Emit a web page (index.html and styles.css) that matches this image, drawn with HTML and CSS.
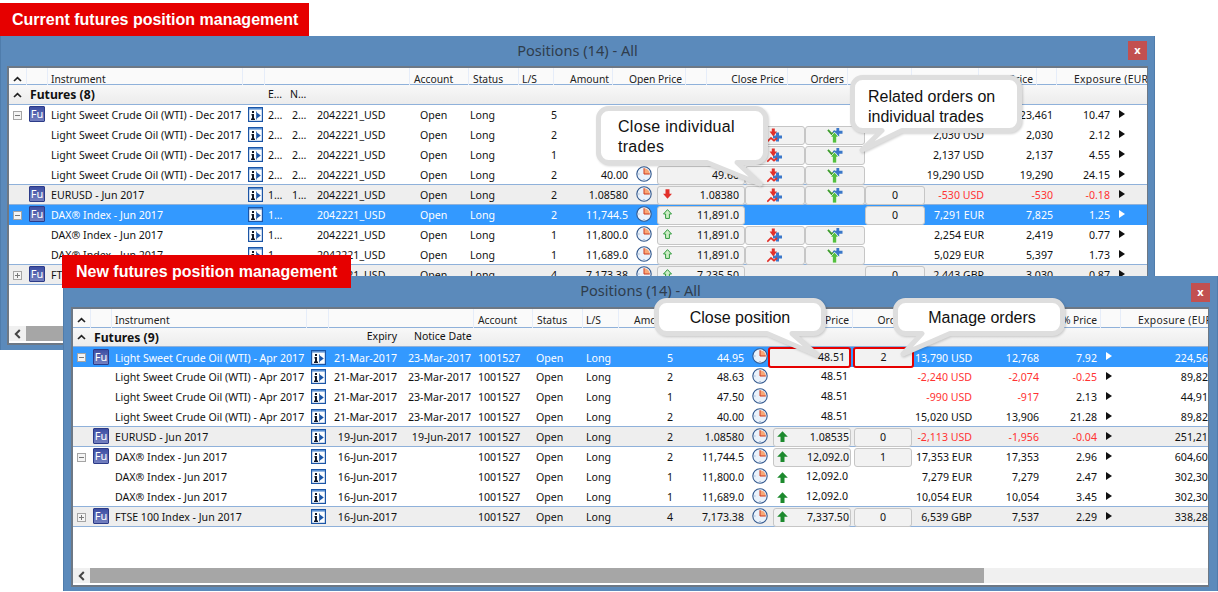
FILE: index.html
```html
<!DOCTYPE html>
<html lang="en">
<head>
<meta charset="utf-8">
<title>Futures position management</title>
<link rel="stylesheet" href="styles.css">
</head>
<body>
<svg class="defs" width="0" height="0" aria-hidden="true">
  <symbol id="clock" viewBox="0 0 16 16">
    <circle cx="8" cy="8" r="7.2" fill="#eaf2fb" stroke="#33598f" stroke-width="1.1"/>
    <path d="M8 8V2.2A5.8 5.8 0 0 1 13.8 8Z" fill="#f8a878"/>
    <path d="M8 2.2V8H13.8" fill="none" stroke="#cf3b1e" stroke-width="1"/>
    <path d="M8 13v1M2.4 8h1" stroke="#7f9cc4" stroke-width="1"/>
  </symbol>
  <symbol id="info" viewBox="0 0 15 15">
    <rect x=".6" y=".6" width="13.8" height="13.8" fill="#fbfdff" stroke="#1b55a6" stroke-width="1.2"/>
    <rect x="1" y="1" width="13" height="1.600" fill="#5a90d2"/>
    <path d="M4 4h2v2H4zM3.500 7H6v4.500h1V13H3v-1.500h1v-3h-.5z" fill="#101828"/>
    <path d="M8 4.500h.8v8H8z" fill="#1b55a6"/>
    <path d="M8.800 5.500 12.800 8.500 8.800 11.500z" fill="#1b55a6"/>
  </symbol>
  <symbol id="closeic" viewBox="0 0 16 14">
    <path d="M9 4h3v3h3v3h-3v3H9v-3H6V7h3z" fill="#3b78c9"/>
    <path d="M4.800 0h3v3h2.200L6.300 8 2.600 3h2.200z" fill="#e2302a"/>
    <path d="M.3 13.200 4 9.500l3 2.700 3-2.700" fill="none" stroke="#e2302a" stroke-width="1.700"/>
  </symbol>
  <symbol id="ordic" viewBox="0 0 16 16">
    <path d="M.5 2 4.500 6.500 8 3" fill="none" stroke="#3d9c2c" stroke-width="1.900"/>
    <path d="M9.500 0h3v3H16v3h-3.500v3h-3V6H6V3h3.500z" fill="#3b78c9"/>
    <path d="M7.500 4.500 12 9.500H9.800V16H5.200V9.500H3z" fill="#55c03f" stroke="#fff" stroke-width=".8"/>
  </symbol>
  <symbol id="upo" viewBox="0 0 9 10">
    <path d="M4.500.6 8.500 5H6.400v4.400H2.600V5H.5z" fill="#cdeec6" stroke="#2f9a3c" stroke-width="1"/>
  </symbol>
  <symbol id="ups" viewBox="0 0 11 11">
    <path d="M5.500.3 10.800 5.800H7.500V11H3.500V5.800H.2z" fill="#1d8a2e"/>
  </symbol>
  <symbol id="downs" viewBox="0 0 9 10">
    <path d="M2.500.3h4v4.500H9L4.500 9.800 0 4.800h2.500z" fill="#e2302a"/>
  </symbol>
  <symbol id="chev" viewBox="0 0 9 6">
    <path d="M1 5 4.500 1.600 8 5" fill="none" stroke="#222" stroke-width="1.700"/>
  </symbol>
  <symbol id="chevl" viewBox="0 0 7 10">
    <path d="M5.800 1 1.800 5l4 4" fill="none" stroke="#444" stroke-width="2"/>
  </symbol>
</svg>

<section class="window w1">
  <h2 class="title">Positions (14) - All<span class="x">x</span></h2>
  <div class="panel">
    <div class="head">
      <span class="hc"><svg class="chev"><use href="#chev"/></svg></span><span class="hc"></span><span class="hc pl">Instrument</span><span class="hc"></span><span class="hc"></span><span class="hc pl4">Account</span><span class="hc pl4">Status</span><span class="hc pl">L/S</span><span class="hc r amt">Amount</span><span class="hc r">Open Price</span><span class="hc"></span><span class="hc r">Close Price</span><span class="hc r">Orders</span><span class="hc r">Net</span><span class="hc r">P/L (ccy)</span><span class="hc r">Price</span><span class="hc"></span><span class="hc exh">Exposure (EUR)</span>
    </div>
    <div class="group"><svg class="chev"><use href="#chev"/></svg><b class="gname">Futures (8)</b><span class="g-e">E…</span><span class="g-n">N…</span></div>
    <div class="rows">
      <div class="row"><span class="exp minus"></span><span class="fu">Fu</span><span class="nm">Light Sweet Crude Oil (WTI) - Dec 2017</span><svg class="inf"><use href="#info"/></svg><span>2…</span><span>2…</span><span>2042221_USD</span><span>Open</span><span>Long</span><span class="n">5</span><span class="n">44.95</span><svg class="clk"><use href="#clock"/></svg><span class="btn"><span>49.66</span></span><span></span><span></span><span></span><span class="n">23,461 USD</span><span class="n">23,461</span><span class="n">10.47</span><span class="tri"></span><span class="n">249,412</span></div>
      <div class="row"><span></span><span></span><span class="nm">Light Sweet Crude Oil (WTI) - Dec 2017</span><svg class="inf"><use href="#info"/></svg><span>2…</span><span>2…</span><span>2042221_USD</span><span>Open</span><span>Long</span><span class="n">2</span><span class="n">48.63</span><svg class="clk"><use href="#clock"/></svg><span class="btn"><span>49.66</span></span><span class="btn ctr"><svg class="act"><use href="#closeic"/></svg></span><span class="btn ctr"><svg class="act"><use href="#ordic"/></svg></span><span></span><span class="n">2,030 USD</span><span class="n">2,030</span><span class="n">2.12</span><span class="tri"></span><span class="n">99,765</span></div>
      <div class="row"><span></span><span></span><span class="nm">Light Sweet Crude Oil (WTI) - Dec 2017</span><svg class="inf"><use href="#info"/></svg><span>2…</span><span>2…</span><span>2042221_USD</span><span>Open</span><span>Long</span><span class="n">1</span><span class="n">47.50</span><svg class="clk"><use href="#clock"/></svg><span class="btn"><span>49.66</span></span><span class="btn ctr"><svg class="act"><use href="#closeic"/></svg></span><span class="btn ctr"><svg class="act"><use href="#ordic"/></svg></span><span></span><span class="n">2,137 USD</span><span class="n">2,137</span><span class="n">4.55</span><span class="tri"></span><span class="n">49,882</span></div>
      <div class="row"><span></span><span></span><span class="nm">Light Sweet Crude Oil (WTI) - Dec 2017</span><svg class="inf"><use href="#info"/></svg><span>2…</span><span>2…</span><span>2042221_USD</span><span>Open</span><span>Long</span><span class="n">2</span><span class="n">40.00</span><svg class="clk"><use href="#clock"/></svg><span class="btn"><span>49.66</span></span><span class="btn ctr"><svg class="act"><use href="#closeic"/></svg></span><span class="btn ctr"><svg class="act"><use href="#ordic"/></svg></span><span></span><span class="n">19,290 USD</span><span class="n">19,290</span><span class="n">24.15</span><span class="tri"></span><span class="n">99,765</span></div>
      <div class="row par"><span></span><span class="fu">Fu</span><span class="nm">EURUSD - Jun 2017</span><svg class="inf"><use href="#info"/></svg><span>1…</span><span>1…</span><span>2042221_USD</span><span>Open</span><span>Long</span><span class="n">2</span><span class="n">1.08580</span><svg class="clk"><use href="#clock"/></svg><span class="btn"><svg class="arr"><use href="#downs"/></svg><span>1.08380</span></span><span class="btn ctr"><svg class="act"><use href="#closeic"/></svg></span><span class="btn ctr"><svg class="act"><use href="#ordic"/></svg></span><span class="btn ctr">0</span><span class="n neg">-530 USD</span><span class="n neg">-530</span><span class="n neg">-0.18</span><span class="tri"></span><span class="n">273,419</span></div>
      <div class="row sel"><span class="exp minus"></span><span class="fu">Fu</span><span class="nm">DAX® Index - Jun 2017</span><svg class="inf"><use href="#info"/></svg><span>1…</span><span></span><span>2042221_USD</span><span>Open</span><span>Long</span><span class="n">2</span><span class="n">11,744.5</span><svg class="clk"><use href="#clock"/></svg><span class="btn"><svg class="arr"><use href="#upo"/></svg><span>11,891.0</span></span><span></span><span></span><span class="btn ctr">0</span><span class="n">7,291 EUR</span><span class="n">7,825</span><span class="n">1.25</span><span class="tri"></span><span class="n">594,660</span></div>
      <div class="row"><span></span><span></span><span class="nm">DAX® Index - Jun 2017</span><svg class="inf"><use href="#info"/></svg><span>1…</span><span></span><span>2042221_USD</span><span>Open</span><span>Long</span><span class="n">1</span><span class="n">11,800.0</span><svg class="clk"><use href="#clock"/></svg><span class="btn"><svg class="arr"><use href="#upo"/></svg><span>11,891.0</span></span><span class="btn ctr"><svg class="act"><use href="#closeic"/></svg></span><span class="btn ctr"><svg class="act"><use href="#ordic"/></svg></span><span></span><span class="n">2,254 EUR</span><span class="n">2,419</span><span class="n">0.77</span><span class="tri"></span><span class="n">297,330</span></div>
      <div class="row"><span></span><span></span><span class="nm">DAX® Index - Jun 2017</span><svg class="inf"><use href="#info"/></svg><span>1…</span><span></span><span>2042221_USD</span><span>Open</span><span>Long</span><span class="n">1</span><span class="n">11,689.0</span><svg class="clk"><use href="#clock"/></svg><span class="btn"><svg class="arr"><use href="#upo"/></svg><span>11,891.0</span></span><span class="btn ctr"><svg class="act"><use href="#closeic"/></svg></span><span class="btn ctr"><svg class="act"><use href="#ordic"/></svg></span><span></span><span class="n">5,029 EUR</span><span class="n">5,397</span><span class="n">1.73</span><span class="tri"></span><span class="n">297,330</span></div>
      <div class="row par"><span class="exp plus"></span><span class="fu">Fu</span><span class="nm">FTSE 100 Index - Jun 2017</span><svg class="inf"><use href="#info"/></svg><span>1…</span><span></span><span>2042221_USD</span><span>Open</span><span>Long</span><span class="n">4</span><span class="n">7,173.38</span><svg class="clk"><use href="#clock"/></svg><span class="btn"><svg class="arr"><use href="#upo"/></svg><span>7,235.50</span></span><span></span><span></span><span class="btn ctr">0</span><span class="n">2,443 GBP</span><span class="n">3,030</span><span class="n">0.87</span><span class="tri"></span><span class="n">281,770</span></div>
    </div>
    <div class="fill"></div>
    <div class="scroll"><span class="sb-btn"><svg class="chevl"><use href="#chevl"/></svg></span><span class="thumb"></span><span class="track"></span></div>
  </div>
</section>

<section class="window w2">
  <h2 class="title">Positions (14) - All<span class="x">x</span></h2>
  <div class="panel">
    <div class="head">
      <span class="hc"><svg class="chev"><use href="#chev"/></svg></span><span class="hc"></span><span class="hc pl">Instrument</span><span class="hc"></span><span class="hc"></span><span class="hc pl4">Account</span><span class="hc pl4">Status</span><span class="hc pl">L/S</span><span class="hc r amt">Amount</span><span class="hc r">Open Price</span><span class="hc"></span><span class="hc r">Close Price</span><span class="hc r">Orders</span><span class="hc r">Net P/L</span><span class="hc r">P/L</span><span class="hc r">% Price</span><span class="hc"></span><span class="hc exh">Exposure (EUR)</span>
    </div>
    <div class="group"><svg class="chev"><use href="#chev"/></svg><b class="gname">Futures (9)</b><span class="g-e">Expiry</span><span class="g-n">Notice Date</span></div>
    <div class="rows">
      <div class="row sel"><span class="exp minus"></span><span class="fu">Fu</span><span class="nm">Light Sweet Crude Oil (WTI) - Apr 2017</span><svg class="inf"><use href="#info"/></svg><span class="n">21-Mar-2017</span><span class="n">23-Mar-2017</span><span class="ac">1001527</span><span class="ac">Open</span><span class="ac">Long</span><span class="n">5</span><span class="n">44.95</span><svg class="clk"><use href="#clock"/></svg><span class="btn hl"><span>48.51</span></span><span class="btn ctr hl">2</span><span class="n">13,790 USD</span><span class="n">12,768</span><span class="n">7.92</span><span class="tri"></span><span class="n">224,560</span></div>
      <div class="row"><span></span><span></span><span class="nm">Light Sweet Crude Oil (WTI) - Apr 2017</span><svg class="inf"><use href="#info"/></svg><span class="n">21-Mar-2017</span><span class="n">23-Mar-2017</span><span class="ac">1001527</span><span class="ac">Open</span><span class="ac">Long</span><span class="n">2</span><span class="n">48.63</span><svg class="clk"><use href="#clock"/></svg><span class="plain">48.51</span><span></span><span class="n neg">-2,240 USD</span><span class="n neg">-2,074</span><span class="n neg">-0.25</span><span class="tri"></span><span class="n">89,824</span></div>
      <div class="row"><span></span><span></span><span class="nm">Light Sweet Crude Oil (WTI) - Apr 2017</span><svg class="inf"><use href="#info"/></svg><span class="n">21-Mar-2017</span><span class="n">23-Mar-2017</span><span class="ac">1001527</span><span class="ac">Open</span><span class="ac">Long</span><span class="n">1</span><span class="n">47.50</span><svg class="clk"><use href="#clock"/></svg><span class="plain">48.51</span><span></span><span class="n neg">-990 USD</span><span class="n neg">-917</span><span class="n">2.13</span><span class="tri"></span><span class="n">44,912</span></div>
      <div class="row"><span></span><span></span><span class="nm">Light Sweet Crude Oil (WTI) - Apr 2017</span><svg class="inf"><use href="#info"/></svg><span class="n">21-Mar-2017</span><span class="n">23-Mar-2017</span><span class="ac">1001527</span><span class="ac">Open</span><span class="ac">Long</span><span class="n">2</span><span class="n">40.00</span><svg class="clk"><use href="#clock"/></svg><span class="plain">48.51</span><span></span><span class="n">15,020 USD</span><span class="n">13,906</span><span class="n">21.28</span><span class="tri"></span><span class="n">89,824</span></div>
      <div class="row par"><span></span><span class="fu">Fu</span><span class="nm">EURUSD - Jun 2017</span><svg class="inf"><use href="#info"/></svg><span class="n">19-Jun-2017</span><span class="n">19-Jun-2017</span><span class="ac">1001527</span><span class="ac">Open</span><span class="ac">Long</span><span class="n">2</span><span class="n">1.08580</span><svg class="clk"><use href="#clock"/></svg><span class="btn"><svg class="arr"><use href="#ups"/></svg><span>1.08535</span></span><span class="btn ctr">0</span><span class="n neg">-2,113 USD</span><span class="n neg">-1,956</span><span class="n neg">-0.04</span><span class="tri"></span><span class="n">251,219</span></div>
      <div class="row"><span class="exp minus"></span><span class="fu">Fu</span><span class="nm">DAX® Index - Jun 2017</span><svg class="inf"><use href="#info"/></svg><span class="n">16-Jun-2017</span><span></span><span class="ac">1001527</span><span class="ac">Open</span><span class="ac">Long</span><span class="n">2</span><span class="n">11,744.5</span><svg class="clk"><use href="#clock"/></svg><span class="btn"><svg class="arr"><use href="#ups"/></svg><span>12,092.0</span></span><span class="btn ctr">1</span><span class="n">17,353 EUR</span><span class="n">17,353</span><span class="n">2.96</span><span class="tri"></span><span class="n">604,600</span></div>
      <div class="row"><span></span><span></span><span class="nm">DAX® Index - Jun 2017</span><svg class="inf"><use href="#info"/></svg><span class="n">16-Jun-2017</span><span></span><span class="ac">1001527</span><span class="ac">Open</span><span class="ac">Long</span><span class="n">1</span><span class="n">11,800.0</span><svg class="clk"><use href="#clock"/></svg><span class="plain"><svg class="arr"><use href="#ups"/></svg><span>12,092.0</span></span><span></span><span class="n">7,279 EUR</span><span class="n">7,279</span><span class="n">2.47</span><span class="tri"></span><span class="n">302,300</span></div>
      <div class="row"><span></span><span></span><span class="nm">DAX® Index - Jun 2017</span><svg class="inf"><use href="#info"/></svg><span class="n">16-Jun-2017</span><span></span><span class="ac">1001527</span><span class="ac">Open</span><span class="ac">Long</span><span class="n">1</span><span class="n">11,689.0</span><svg class="clk"><use href="#clock"/></svg><span class="plain"><svg class="arr"><use href="#ups"/></svg><span>12,092.0</span></span><span></span><span class="n">10,054 EUR</span><span class="n">10,054</span><span class="n">3.45</span><span class="tri"></span><span class="n">302,300</span></div>
      <div class="row par"><span class="exp plus"></span><span class="fu">Fu</span><span class="nm">FTSE 100 Index - Jun 2017</span><svg class="inf"><use href="#info"/></svg><span class="n">16-Jun-2017</span><span></span><span class="ac">1001527</span><span class="ac">Open</span><span class="ac">Long</span><span class="n">4</span><span class="n">7,173.38</span><svg class="clk"><use href="#clock"/></svg><span class="btn"><svg class="arr"><use href="#ups"/></svg><span>7,337.50</span></span><span class="btn ctr">0</span><span class="n">6,539 GBP</span><span class="n">7,537</span><span class="n">2.29</span><span class="tri"></span><span class="n">338,280</span></div>
    </div>
    <div class="fill"></div>
    <div class="scroll"><span class="sb-btn"><svg class="chevl"><use href="#chevl"/></svg></span><span class="thumb"></span><span class="track"></span></div>
  </div>
</section>

<div class="banner b1">Current futures position management</div>
<div class="banner b2">New futures position management</div>

<div class="callout c1">
  <svg class="bubble" width="172" height="82"><path d="M12.500 2.500H159.500a10 10 0 0 1 10 10V46.500a10 10 0 0 1-10 10H141L164 78 111 56.500H12.500a10 10 0 0 1-10-10V12.500a10 10 0 0 1 10-10Z"/></svg>
  <p>Close individual<br>trades</p>
</div>
<div class="callout c2">
  <svg class="bubble" width="172" height="80"><path d="M12.500 2.500H159.500a10 10 0 0 1 10 10V45.500a10 10 0 0 1-10 10H52L12 75 32 55.500H12.500a10 10 0 0 1-10-10V12.500a10 10 0 0 1 10-10Z"/></svg>
  <p>Related orders on<br>individual trades</p>
</div>
<div class="callout c3">
  <svg class="bubble" width="172" height="60"><path d="M12.500 2.500H159.500a10 10 0 0 1 10 10V25.500a10 10 0 0 1-10 10H138L163 57 113 35.500H12.500a10 10 0 0 1-10-10V12.500a10 10 0 0 1 10-10Z"/></svg>
  <p>Close position</p>
</div>
<div class="callout c4">
  <svg class="bubble" width="172" height="60"><path d="M12.500 2.500H159.500a10 10 0 0 1 10 10V25.500a10 10 0 0 1-10 10H57L10 56 29 35.500H12.500a10 10 0 0 1-10-10V12.500a10 10 0 0 1 10-10Z"/></svg>
  <p>Manage orders</p>
</div>
</body>
</html>
```

FILE: styles.css
```css
html, body { margin: 0; padding: 0; background: #fff; }
body {
  position: relative;
  width: 1218px;
  height: 592px;
  overflow: hidden;
  font-family: "Noto Sans", "Liberation Sans", sans-serif;
  font-size: 10.6px;
  color: #111;
}
.defs { position: absolute; }

/* windows on the desktop */
.window {
  position: absolute;
  box-sizing: border-box;
  display: flex;
  flex-direction: column;
  background: #5b8abb;
  width: 1155px;
  border: 1px solid #4f7cab;
  border-width: 0 1px 0 1px;
}
.w1 { left: 0; top: 36px; height: 314px; }
.w2 { left: 63px; top: 276px; height: 315px; }

.title {
  position: relative;
  margin: 0;
  height: 30px;
  flex: none;
  text-align: center;
  font-weight: 400;
  font-size: 14.6px;
  line-height: 28px;
  color: #2f3d4d;
}
.w2 .title { height: 31px; }
.x {
  position: absolute;
  right: 7px;
  top: 5px;
  width: 19px;
  height: 19px;
  background: #c25050;
  color: #fff;
  font-size: 11px;
  font-weight: 700;
  line-height: 17px;
  text-align: center;
}
.w2 .x { top: 7px; }

.panel {
  flex: 1;
  min-height: 0;
  display: flex;
  flex-direction: column;
  overflow: hidden;
  background: #fff;
  border: 2px solid #6d7885;
  border-right-width: 1px;
  margin: 0 6px 5px 6px;
}
.w2 .panel { margin: 0 8px 4px 7px; }

/* column header */
.head {
  display: grid;
  flex: none;
  height: 16px;
  border-bottom: 1px solid #8fb1da;
  background: #fafafa;
  font-size: 10.3px;
  line-height: 23px;
  color: #222;
  white-space: nowrap;
}
.w1 .head { grid-template-columns: 18px 21px 195px 22px 145px 59px 50px 35px 59px 73px 21px 81px 60px 64px 67px 58px 20px 120px; }
.w2 .head { height: 18px; line-height: 23px; grid-template-columns: 18px 21px 195px 22px 145px 59px 50px 36px 68px 66px 19px 81px 62px 85px 40px 61px 20px 100px; }
.hc { border-right: 1px solid #e6edf9; min-width: 0; overflow: visible; }
.pl { padding-left: 3px; }
.pl4 { padding-left: 4px; }
.r { text-align: right; padding-right: 3px; }
.w2 .amt { padding-right: 13px; }
.exh { padding-left: 17px; border-right: 0; letter-spacing: .3px; }
.chev { width: 9px; height: 6px; display: block; }
.hc .chev { margin: 8px 0 0 4px; }

/* group row */
.group {
  display: flex;
  align-items: center;
  flex: none;
  position: relative;
  height: 19px;
  border-bottom: 1px solid #8fb1da;
  background: linear-gradient(#f8f8f8, #ececec);
  font-size: 10.5px;
}
.w2 .group { height: 18px; }
.group .chev { margin-left: 4px; }
.gname { margin-left: 8px; font-size: 12.2px; color: #111; }
.g-e, .g-n { position: absolute; top: 2px; }
.w2 .g-e, .w2 .g-n { top: 1px; }
.w1 .g-e { left: 259px; }
.w1 .g-n { left: 281px; }
.w2 .g-e { right: 811px; }
.w2 .g-n { left: 341px; }

/* data rows */
.rows { flex: none; }
.row {
  display: grid;
  align-items: center;
  height: 20px;
  line-height: 20px;
  white-space: nowrap;
}
.w1 .row { grid-template-columns: 20px 22px 197px 20px 24px 25px 103px 50px 50px 40px 71px 26px 88px 60px 60px 60px 62px 69px 57px 17px 60px; }
.w2 .row { grid-template-columns: 20px 22px 196px 20px 69px 74px 58px 50px 58px 36px 71px 21px 83px 64px 60px 67px 58px 25px 92px; }
.ac { padding-left: 4px; }
.n { text-align: right; padding-right: 3px; }
.neg { color: #f33; }
.par {
  background: #eee;
  box-shadow: 0 -1px 0 #8fb1da, inset 0 -1px 0 #8fb1da;
}
.sel { background: #3399ff; color: #fff; }
.sel .neg { color: #fff; }

.exp {
  position: relative;
  box-sizing: border-box;
  display: block;
  width: 9px;
  height: 9px;
  margin-left: 4px;
  border: 1px solid #a5a5a5;
  background: #f4f4f4;
}
.exp::before {
  content: "";
  position: absolute;
  left: 1px;
  right: 1px;
  top: 3px;
  height: 1px;
  background: #777;
}
.plus::after {
  content: "";
  position: absolute;
  top: 1px;
  bottom: 1px;
  left: 3px;
  width: 1px;
  background: #777;
}
.fu {
  display: block;
  box-sizing: border-box;
  width: 16px;
  height: 16px;
  margin-bottom: 2px;
  background: linear-gradient(#3d4ea3, #7480bf);
  border: 1px solid #2c3b88;
  border-radius: 1px;
  color: #fff;
  font-size: 11px;
  line-height: 13px;
  text-align: center;
}
.inf { display: block; width: 15px; height: 15px; margin-bottom: 1px; }
.clk { display: block; width: 16px; height: 16px; margin: 0 0 3px 5px; }

.btn {
  display: flex;
  align-items: center;
  justify-content: flex-end;
  box-sizing: border-box;
  height: 19px;
  padding-right: 5px;
  color: #111;
  background: #f2f2f2;
  border: 1.500px solid #c6c6c6;
  border-radius: 3px;
  line-height: 15px;
}
.btn.ctr { justify-content: center; padding: 0; }
.w2 .btn { margin-left: 5px; padding-right: 1px; }
.w2 .btn.ctr { margin: 0 3px; padding: 0; }
.arr { width: 9px; height: 10px; margin: 0 auto 3px 5px; display: block; }
.w2 .arr { width: 11px; height: 11px; margin: 0 auto 1px 3px; }
.plain {
  display: flex;
  align-items: center;
  justify-content: flex-end;
  padding: 0 3px 2px 0;
  height: 18px;
  line-height: 15px;
}
.w2 .plain .arr { margin: 2px auto 0 9px; }
.act { width: 16px; height: 15px; display: block; }
.w2 .btn.hl { height: 21px; margin: 0; padding-right: 4px; border: 2.500px solid #e60000; border-radius: 3px; }
.w2 .btn.ctr.hl { margin: 0 1px 0 2px; padding: 0; }
.tri {
  display: block;
  width: 0;
  height: 0;
  margin: 0 0 3px 6px;
  border-style: solid;
  border-width: 4.500px 0 4.500px 6px;
  border-color: transparent transparent transparent #111;
}
.sel .tri { border-left-color: #fff; }

/* scrollbar */
.fill { flex: 1; background: #fff; }
.scroll { display: flex; flex: none; height: 15px; background: #f0f0f0; border-bottom: 2px solid #fff; }
.sb-btn { flex: none; width: 17px; display: flex; align-items: center; justify-content: center; }
.chevl { width: 7px; height: 10px; display: block; }
.thumb { flex: none; width: 894px; background: #a6a6a6; }
.track { flex: 1; }

/* headline labels */
.banner {
  position: absolute;
  box-sizing: border-box;
  height: 33px;
  background: #e60000;
  color: #fff;
  font-family: "Liberation Sans", Arial, sans-serif;
  font-weight: 700;
  font-size: 16px;
  line-height: 33px;
  white-space: nowrap;
}
.b1 { left: 0; top: 3px; width: 309px; padding-left: 12px; }
.b2 { left: 62px; top: 255px; width: 289px; padding-left: 14px; }

/* callouts */
.callout { position: absolute; width: 172px; font-family: "Liberation Sans", Arial, sans-serif; font-size: 16px; line-height: 20px; color: #111; }
.callout p { position: relative; margin: 0; white-space: nowrap; }
.bubble { position: absolute; left: 0; top: 0; overflow: visible; filter: drop-shadow(1px 1px 1px rgba(0, 0, 0, .18)); }
.bubble path { fill: #fff; stroke: #dedede; stroke-width: 5; stroke-linejoin: round; }
.c1 { left: 596px; top: 106px; }
.c1 p { padding: 11px 0 0 22px; letter-spacing: .3px; }
.c2 { left: 850px; top: 75px; }
.c2 p { padding: 12px 0 0 18px; }
.c3 { left: 654px; top: 298px; text-align: center; }
.c3 p { padding-top: 10px; }
.c4 { left: 893px; top: 298px; text-align: center; }
.c4 p { padding: 10px 0 0 6px; }
```
